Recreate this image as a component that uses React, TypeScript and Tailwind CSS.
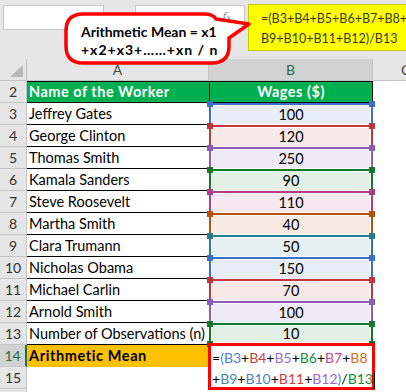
import React from "react";

type Tone = { border: string; fill: string; sq: string };

const T: Record<string, Tone> = {
  blue: { border: "border-[#3c6fc5]", fill: "bg-[#e7eef8]", sq: "bg-[#3c6fc5]" },
  red: { border: "border-[#c0363b]", fill: "bg-[#f8e9e9]", sq: "bg-[#c0363b]" },
  purple: { border: "border-[#8c5cb8]", fill: "bg-[#efebf6]", sq: "bg-[#8c5cb8]" },
  green: { border: "border-[#17762b]", fill: "bg-[#e3f0e5]", sq: "bg-[#17762b]" },
  magenta: { border: "border-[#b13d84]", fill: "bg-[#f5e8f0]", sq: "bg-[#b13d84]" },
  orange: { border: "border-[#b5500e]", fill: "bg-[#f7ebe1]", sq: "bg-[#b5500e]" },
  teal: { border: "border-[#297a8b]", fill: "bg-[#e6eff1]", sq: "bg-[#297a8b]" },
};

const data = [
  { n: 3, name: "Jeffrey Gates", v: "100", t: "blue" },
  { n: 4, name: "George Clinton", v: "120", t: "red" },
  { n: 5, name: "Thomas Smith", v: "250", t: "purple" },
  { n: 6, name: "Kamala Sanders", v: "90", t: "green" },
  { n: 7, name: "Steve Roosevelt", v: "110", t: "magenta" },
  { n: 8, name: "Martha Smith", v: "40", t: "orange" },
  { n: 9, name: "Clara Trumann", v: "50", t: "teal" },
  { n: 10, name: "Nicholas Obama", v: "150", t: "blue" },
  { n: 11, name: "Michael Carlin", v: "70", t: "red" },
  { n: 12, name: "Arnold Smith", v: "100", t: "purple" },
  { n: 13, name: "Number of Observations (n)", v: "10", t: "green" },
];

const RowLabel = ({ n, active }: { n?: number; active?: boolean }) =>
  active ? (
    <div className="flex items-center justify-center bg-[#d2d2d2] border-r-2 border-r-[#217346] border-b border-b-[#c4c4c4] text-[14px] text-[#1e6e3f]">
      {n}
    </div>
  ) : (
    <div className="flex items-center justify-center bg-[#e6e6e6] border-r border-b border-[#c4c4c4] text-[14px] text-[#333]">
      {n}
    </div>
  );

const Ref = ({ c, children }: { c: string; children: React.ReactNode }) => (
  <span className={c}>{children}</span>
);

export default function App() {
  return (
    <div className="relative w-[406px] h-[392px] overflow-hidden bg-white font-['Lato',sans-serif] text-black">
      {/* top bar */}
      <div className="h-[59px] bg-[#e6e6e6] flex items-start pt-[5px] pl-[3px]">
        <div className="w-[101px] h-[25px] bg-white border border-[#c6c6c6]" />
        <div className="ml-[31px] w-[110px] h-[25px] bg-white border border-[#c6c6c6] flex justify-end items-start pr-[13px]">
          <span className="font-['DejaVu_Serif',serif] italic text-[11px] leading-[11px] mt-[5px] text-[#8a8a8a]">
            f<span className="text-[8px]">x</span>
          </span>
        </div>
      </div>

      {/* grid */}
      <div className="grid grid-cols-[27px_182px_164px_1fr] auto-rows-[22px]">
        {/* header row */}
        <div className="relative bg-[#e6e6e6] border-r border-b border-[#c4c4c4]">
          <svg className="absolute left-0 top-0" width="27" height="22">
            <polygon points="10,18 23,18 23,6" fill="#b8b8b8" />
          </svg>
        </div>
        <div className="flex items-center justify-center bg-[#e6e6e6] border-r border-b border-[#c4c4c4] text-[14px] text-[#444]">
          A
        </div>
        <div className="flex items-center justify-center bg-[#d2d2d2] border-r border-b border-[#c4c4c4] text-[14px] text-[#1e6e3f]">
          B
        </div>
        <div className="flex items-center bg-[#e6e6e6] border-b border-[#c4c4c4] text-[14px] text-[#444] pl-[28px] overflow-hidden">
          C
        </div>

        {/* row 2 */}
        <RowLabel n={2} />
        <div className="flex items-center bg-[#00b050] border-t border-b border-black pl-[2px] text-white font-bold text-[14.5px] tracking-[0.5px] whitespace-nowrap">
          Name of the Worker
        </div>
        <div className="flex items-center justify-center bg-[#00b050] border border-black text-white font-bold text-[14.5px] tracking-[0.5px]">
          Wages ($)
        </div>
        <div />

        {data.map((r) => {
          const t = T[r.t];
          const last = r.n === 13;
          return (
            <React.Fragment key={r.n}>
              <RowLabel n={r.n} />
              <div className="flex items-center bg-white border-b border-black pl-[2px] text-[14.5px] whitespace-nowrap">
                {r.name}
              </div>
              <div
                className={`relative bg-white p-px border-t-2 border-x-2 ${t.border} ${last ? "border-b-2" : ""}`}
              >
                <div className={`h-full flex items-center justify-center text-[14.5px] ${t.fill}`}>{r.v}</div>
                <span className={`absolute left-[-4px] top-[-4px] w-[6px] h-[6px] ${t.sq}`} />
                <span className={`absolute right-[-4px] top-[-4px] w-[6px] h-[6px] ${t.sq}`} />
                {last && (
                  <>
                    <span className={`absolute left-[-4px] bottom-[-4px] w-[6px] h-[6px] ${t.sq}`} />
                    <span className={`absolute right-[-4px] bottom-[-4px] w-[6px] h-[6px] ${t.sq}`} />
                  </>
                )}
              </div>
              <div />
            </React.Fragment>
          );
        })}

        {/* row 14 */}
        <RowLabel n={14} active />
        <div className="flex items-center bg-[#ffc000] pl-[2px] font-bold text-[14.5px] tracking-[0.6px] whitespace-nowrap">
          Arithmetic Mean
        </div>
        <div />
        <div />

        {/* row 15 */}
        <RowLabel n={15} />
        <div />
        <div />
        <div />

        {/* row 16 */}
        <RowLabel />
        <div />
        <div />
        <div />
      </div>

      {/* in-cell formula editor */}
      <div className="absolute left-[208px] top-[343px] w-[167px] h-[47px] border-[3px] border-[#ff0000] bg-white pl-px pt-[1px] text-[14px] leading-[21px] whitespace-nowrap">
        <div>
          =<Ref c="text-[#4a7fd0]">(</Ref>
          <Ref c="text-[#4a7fd0]">B3</Ref>+<Ref c="text-[#d04040]">B4</Ref>+<Ref c="text-[#9a6ad0]">B5</Ref>+
          <Ref c="text-[#109040]">B6</Ref>+<Ref c="text-[#c04a90]">B7</Ref>+<Ref c="text-[#d07020]">B8</Ref>
        </div>
        <div>
          +<Ref c="text-[#3a8aa0]">B9</Ref>+<Ref c="text-[#4a7fd0]">B10</Ref>+<Ref c="text-[#d04040]">B11</Ref>+
          <Ref c="text-[#9a6ad0]">B12</Ref>
          <Ref c="text-[#4a7fd0]">)</Ref>/<Ref c="text-[#109040]">B13</Ref>
          <span className="inline-block w-px h-[17px] bg-black align-middle ml-px" />
        </div>
      </div>

      {/* yellow formula callout */}
      <div className="absolute left-[248px] top-[4px] w-[160px] h-[47px] bg-[#ffff00] border border-[#c8c800] pl-[12px] pt-[4px] text-[12.5px] leading-[20px] text-[#3a3a20] whitespace-nowrap">
        <div>=(B3+B4+B5+B6+B7+B8+</div>
        <div>B9+B10+B11+B12)/B13</div>
      </div>

      {/* speech bubble */}
      <svg className="absolute left-0 top-0 pointer-events-none" width="260" height="80">
        <path
          d="M 83 14 H 204 Q 213 14 216 19 L 249 24 L 229 38 V 46 Q 229 63 212 63 H 83 Q 66 63 66 46 V 31 Q 66 14 83 14 Z"
          fill="white"
          stroke="#ff0000"
          strokeWidth="3.5"
          strokeLinejoin="round"
        />
      </svg>
      <div className="absolute left-[81px] top-[23px] font-bold text-[14px] leading-[18px] whitespace-nowrap">
        <div>Arithmetic Mean = x1</div>
        <div className="tracking-[1px]">+x2+x3+……+xn / n</div>
      </div>
    </div>
  );
}
